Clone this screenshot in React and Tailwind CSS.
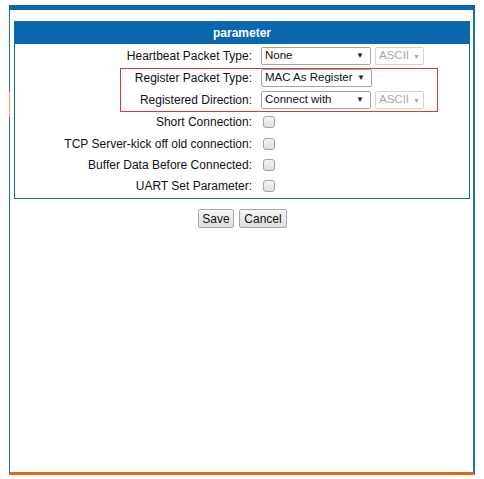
import React from 'react';

const FONT = { fontFamily: '"Liberation Sans", Arial, sans-serif' };

function Select({ value, width, disabled }) {
  return (
    <div
      className={`h-[18px] ${width} flex items-center rounded-[2px] border bg-white leading-none whitespace-nowrap ${
        disabled
          ? 'justify-start gap-[4px] pl-[3px] border-[#d3d3d3] text-[#a8a8a8] text-[11.5px]'
          : 'justify-between pl-[3px] pr-[6px] border-[#a6a6a6] text-[#111] text-[11.5px]'
      }`}
    >
      <span>{value}</span>
      <span className={`text-[7px] ${disabled ? 'text-[#a8a8a8]' : 'text-[#222] text-[8px]'}`}>▼</span>
    </div>
  );
}

function Checkbox() {
  return (
    <div className="ml-[2px] w-[12px] h-[12px] rounded-[3px] border border-[#a3a3a3] bg-gradient-to-b from-[#f4f4f4] to-[#dedede]" />
  );
}

function Row({ label, h, children }) {
  return (
    <div className={`flex items-center ${h}`}>
      <div className="w-[237px] text-right text-[12px] text-[#111] whitespace-nowrap">{label}</div>
      <div className="pl-[9px] flex items-center">{children}</div>
    </div>
  );
}

function Button({ label, width }) {
  return (
    <button
      type="button"
      className={`${width} h-[19px] border border-[#a9a9a9] rounded-[2px] bg-gradient-to-b from-[#f6f6f6] to-[#dddddd] text-[12px] text-[#111] leading-none`}
    >
      {label}
    </button>
  );
}

export default function App() {
  return (
    <div className="relative w-[484px] h-[479px] bg-white overflow-hidden" style={FONT}>
      <div className="ml-[9px] mt-[5px] w-[466px] h-[5px] bg-[#0b66ad]" />
      <div className="relative ml-[9px] pt-[11px] w-[466px] h-[465px] border-l border-l-[#1c6fa9] border-r-2 border-r-[#1c6fa9] border-b-[3px] border-b-[#e8661a]">
        <div className="absolute left-[-1px] top-[82px] w-[1px] h-[25px] bg-[#f0a040]" />
        <div className="ml-[4px] w-[456px] border border-[#0b6aa8]">
          <div className="h-[22px] bg-[#0b67b0] flex items-center justify-center text-white font-bold text-[12px]">
            parameter
          </div>
          <div className="pt-[1px] pb-[2px]">
            <Row label="Heartbeat Packet Type:" h="h-[22px]">
              <Select value="None" width="w-[110px]" />
              <div className="ml-[4px]">
                <Select value="ASCII" width="w-[49px]" disabled />
              </div>
            </Row>
            <Row label="Register Packet Type:" h="h-[22px]">
              <Select value="MAC As Register" width="w-[111px]" />
            </Row>
            <Row label="Registered Direction:" h="h-[22px]">
              <Select value="Connect with" width="w-[110px]" />
              <div className="ml-[4px]">
                <Select value="ASCII" width="w-[49px]" disabled />
              </div>
            </Row>
            <Row label="Short Connection:" h="h-[22px]">
              <Checkbox />
            </Row>
            <Row label="TCP Server-kick off old connection:" h="h-[21px]">
              <Checkbox />
            </Row>
            <Row label="Buffer Data Before Connected:" h="h-[21px]">
              <Checkbox />
            </Row>
            <Row label="UART Set Parameter:" h="h-[21px]">
              <Checkbox />
            </Row>
          </div>
        </div>
        <div className="mt-[10px] flex justify-center gap-[5px] pl-[2px]">
          <Button label="Save" width="w-[36px]" />
          <Button label="Cancel" width="w-[48px]" />
        </div>
      </div>
      <div className="absolute left-[120px] top-[68px] w-[318px] h-[44px] border border-[#d9393b]" />
    </div>
  );
}
